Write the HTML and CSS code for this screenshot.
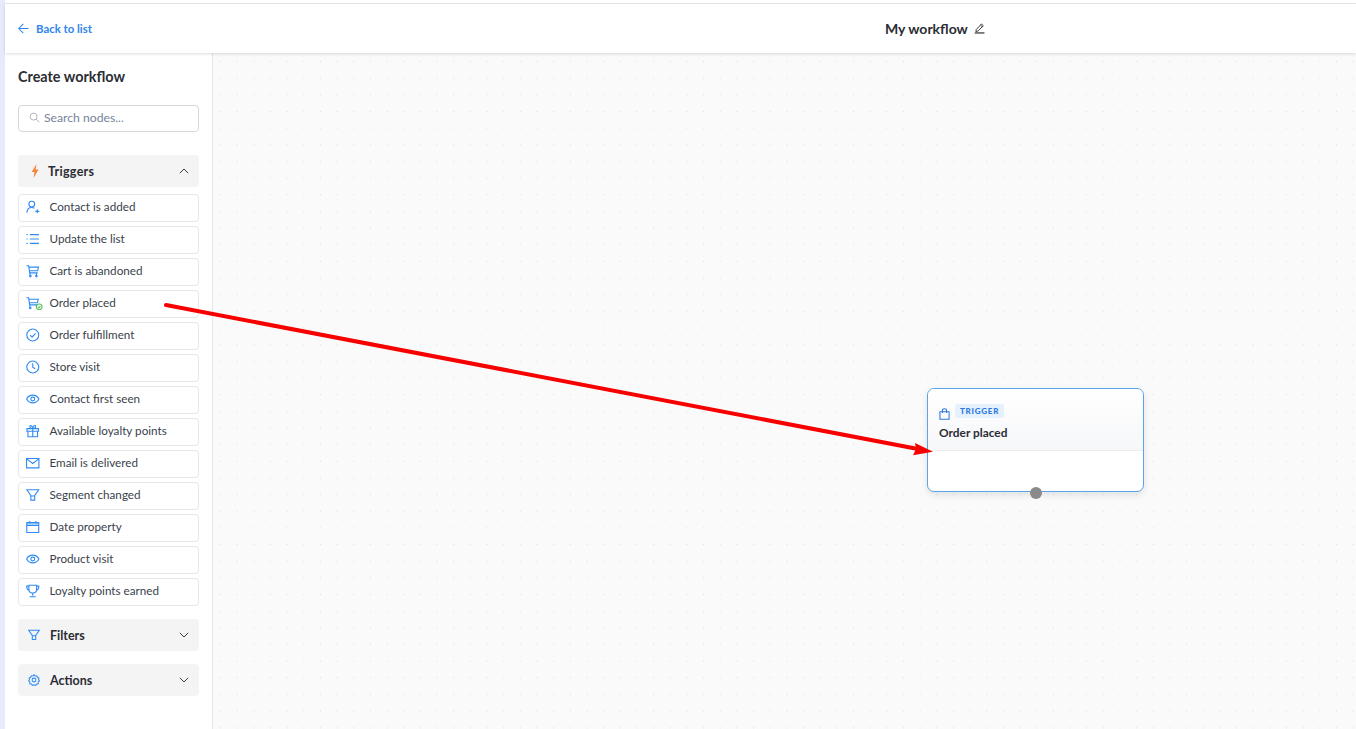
FILE: index.html
```html
<!DOCTYPE html>
<html lang="en">
<head>
<meta charset="utf-8">
<title>My workflow</title>
<link rel="stylesheet" href="styles.css">
</head>
<body>
<div class="stripe"></div>
<div class="app">
  <div class="topline"></div>
  <header class="header">
    <a class="back">
      <svg class="back-icon" viewBox="0 0 12 12"><path d="M11.500 6H.8M5.800 1 .8 6l5 5"/></svg>
      Back to list
    </a>
    <div class="title">My workflow
      <svg class="pencil" viewBox="0 0 12 12"><path d="M2.400 7.800 8.200 1.600l2 1.900-5.900 5.900-2.300.4zM7.100 2.800l2 1.900"/><path class="under" d="M.8 11.400h10.600"/></svg>
    </div>
  </header>
  <div class="main">
    <aside class="sidebar">
      <h1 class="side-title">Create workflow</h1>
      <div class="search">
        <svg class="search-icon" viewBox="0 0 12 12"><circle cx="5" cy="5" r="3.800"/><path d="m7.800 7.800 3.400 3.400"/></svg>
        <span>Search nodes...</span>
      </div>
      <div class="group triggers">
        <svg class="g-icon bolt" viewBox="0 0 8 14"><path d="M5.500 0 .6 8h2.800L2.500 14 7.600 5.600H4.700z"/></svg>
        <span class="g-label">Triggers</span>
        <svg class="chev" viewBox="0 0 10 6"><path d="m.8 5.200 4.200-4.200 4.200 4.200"/></svg>
      </div>
      <ul class="items">
        <li class="item"><svg class="i" viewBox="0 0 14 14"><circle cx="6" cy="4" r="3"/><path d="M1 13c0-3.500 2-5.500 5-5.500 1 0 2 .3 2.800.8M9.600 11.500h4.200M11.700 9.400v4.200"/></svg>Contact is added</li>
        <li class="item"><svg class="i" viewBox="0 0 14 14"><path d="M4 2.500h9.500M4 7h9.500M4 11.500h9.500M.5 2.500h1.200M.5 7h1.200M.5 11.500h1.200"/></svg>Update the list</li>
        <li class="item"><svg class="i" viewBox="0 0 14 14"><path d="M.5 1.500h2.300l1 7.500h8.400M3 3h10l-1 3.800H3.500M4.200 9.500v2.500M10.800 9.500v2.500"/><circle cx="4.500" cy="12.300" r=".8"/><circle cx="10.800" cy="12.300" r=".8"/></svg>Cart is abandoned</li>
        <li class="item"><svg class="i wide" viewBox="0 0 18 14"><path d="M.5 1.500h2.300l1 7.500h8.400M3 3h10l-1 3.800H3.500M4.200 9.500v2.500M10.800 9.500v1"/><circle cx="4.500" cy="12.300" r=".8"/><circle class="ok" cx="14" cy="11" r="3"/><path class="ok" d="m12.700 11 1 1 1.600-1.800"/></svg>Order placed</li>
        <li class="item"><svg class="i" viewBox="0 0 14 14"><circle cx="7" cy="7" r="6.200"/><path d="m4.300 7.200 2 2 3.600-4"/></svg>Order fulfillment</li>
        <li class="item"><svg class="i" viewBox="0 0 14 14"><circle cx="7" cy="7" r="6.200"/><path d="M7 3.200V7.300l2.500 1.500"/></svg>Store visit</li>
        <li class="item"><svg class="i" viewBox="0 0 14 14"><path d="M.6 7C2 4.300 4.300 3 7 3s5 1.300 6.400 4c-1.400 2.700-3.700 4-6.400 4S2 9.700.6 7z"/><circle cx="7" cy="7" r="2"/></svg>Contact first seen</li>
        <li class="item"><svg class="i" viewBox="0 0 14 14"><path d="M1 4.500h12v2.700H1zM2 7.200V13h10V7.200M7 4.500V13M7 4.500C5 4.500 3.800 3.500 4 2.200 4.300.6 6.500 1 7 4.500c.5-3.500 2.700-3.900 3-2.300.2 1.300-1 2.300-3 2.300z"/></svg>Available loyalty points</li>
        <li class="item"><svg class="i" viewBox="0 0 14 14"><path d="M.6 2.400h12.800v9.600H.6zM.8 2.700 7 7.500l6.200-4.800"/></svg>Email is delivered</li>
        <li class="item"><svg class="i" viewBox="0 0 14 14"><path d="M.8 1.500h12.400L9 7.500v4.800H5V7.500zM5 8h4"/></svg>Segment changed</li>
        <li class="item"><svg class="i" viewBox="0 0 14 14"><path class="cal" d="M.8 2.500h12.400v3H.8z"/><path d="M.8 2.500h12.400v10.200H.8zM.8 5.500h12.400M3.800 .8v2.500M10.200 .8v2.500"/></svg>Date property</li>
        <li class="item"><svg class="i" viewBox="0 0 14 14"><path d="M.6 7C2 4.300 4.300 3 7 3s5 1.300 6.400 4c-1.400 2.700-3.700 4-6.400 4S2 9.700.6 7z"/><circle cx="7" cy="7" r="2"/></svg>Product visit</li>
        <li class="item"><svg class="i" viewBox="0 0 14 14"><path d="M3 1h8v4.500c0 2.300-1.800 3.700-4 3.700S3 7.800 3 5.500zM3 2H.7c0 2.500 1 4 3 4.500M11 2h2.300c0 2.500-1 4-3 4.500M7 9.200V12M3.800 13h6.400"/></svg>Loyalty points earned</li>
      </ul>
      <div class="group filters">
        <svg class="g-icon line" viewBox="0 0 14 14"><path d="M.8 1.500h12.400L9 7.500v4.800H5V7.500zM5 8h4"/></svg>
        <span class="g-label">Filters</span>
        <svg class="chev" viewBox="0 0 10 6"><path d="m.8.800 4.200 4.200 4.200-4.200"/></svg>
      </div>
      <div class="group actions">
        <svg class="g-icon line" viewBox="0 0 14 14"><path d="M7 .8l1.300 1.500 2-.3.600 1.900 1.900.8-.5 1.900 1 1.400-1.400 1.400.1 2-2 .3-1 1.700L7 12.500l-1.900.9-1-1.700-2-.3.100-2L.8 8l1-1.400-.5-1.900 1.900-.8.600-1.900 2 .3z"/><circle cx="7" cy="7" r="2.200"/></svg>
        <span class="g-label">Actions</span>
        <svg class="chev" viewBox="0 0 10 6"><path d="m.8.800 4.200 4.200 4.200-4.200"/></svg>
      </div>
    </aside>
    <section class="canvas">
      <div class="node">
        <div class="node-head">
          <div class="node-tag-row">
            <svg class="bag" viewBox="0 0 12 13"><path d="M1 4h10v8.300H1zM3.700 5.500V2.800C3.700 1.500 4.700.8 6 .8s2.300.7 2.300 2v2.700"/></svg>
            <span class="tag">TRIGGER</span>
          </div>
          <div class="node-name">Order placed</div>
        </div>
        <span class="port"></span>
      </div>
    </section>
  </div>
</div>
<svg class="arrow" viewBox="0 0 1356 729"><path class="arrow-line" d="M166 305 918 449"/><path class="arrow-head" d="M933 451.800 913 455.200 916 449 915 443z"/></svg>
</body>
</html>
```
FILE: styles.css
```css
* { box-sizing: border-box; }
html, body { margin: 0; height: 100%; }
body {
  display: flex;
  height: 729px;
  overflow: hidden;
  background: #fff;
  font-family: Lato, "Noto Sans", sans-serif;
  color: #2b2f38;
}
.stripe { width: 5px; flex: none; background: #e6eafc; }
.app { flex: 1; display: flex; flex-direction: column; min-width: 0; }
.topline { height: 4px; flex: none; border-bottom: 1px solid #e8e9ee; }
.header {
  height: 49px;
  flex: none;
  display: flex;
  align-items: center;
  padding-left: 13px;
  background: #fff;
  box-shadow: 0 1px 3px rgba(0,0,0,.14);
  position: relative;
  z-index: 2;
}
.back {
  width: 867px;
  display: flex;
  align-items: center;
  gap: 7px;
  font-size: 11.4px;
  font-weight: 700;
  color: #2f86f0;
}
.back-icon { width: 11px; height: 11px; fill: none; stroke: #2f86f0; stroke-width: 1.1; }
.title {
  display: flex;
  align-items: center;
  gap: 6px;
  padding-bottom: 1px;
  font-size: 14px;
  font-weight: 700;
  color: #2b2d33;
}
.pencil { width: 11px; height: 12px; fill: none; stroke: #2b2d33; stroke-width: 1; }
.pencil .under { stroke-width: 1.3; }
.main { flex: 1; display: flex; min-height: 0; }
.sidebar {
  width: 208px;
  flex: none;
  padding: 17px 13px 0;
  border-right: 1px solid #e6e6e8;
  background: #fff;
}
.side-title { margin: 0; font-size: 14.4px; line-height: 14px; font-weight: 700; color: #2b2d33; }
.search {
  margin-top: 21px;
  height: 27px;
  display: flex;
  align-items: center;
  gap: 4px;
  padding-left: 10px;
  padding-bottom: 2px;
  border: 1px solid #d5d7da;
  border-radius: 4px;
  font-size: 12.2px;
  color: #77839a;
}
.search-icon { width: 11px; height: 11px; fill: none; stroke: #a9adb3; stroke-width: 1; }
.group {
  height: 32px;
  display: flex;
  align-items: center;
  background: #f4f4f5;
  border-radius: 4px;
  padding-right: 10px;
  font-size: 12.5px;
  font-weight: 700;
  color: #2b2d33;
}
.triggers { margin-top: 23px; padding-left: 13px; letter-spacing: .3px; }
.filters { margin-top: 13px; padding-left: 10px; }
.actions { margin-top: 13px; padding-left: 10px; }
.g-icon { flex: none; }
.bolt { width: 8px; height: 14px; margin-right: 9px; fill: #f5863f; }
.line { width: 12px; height: 12px; margin-right: 10px; fill: none; stroke: #2f8cf5; stroke-width: 1.2; }
.g-label { flex: 1; }
.chev { width: 10px; height: 6px; fill: none; stroke: #3a3d44; stroke-width: 1; }
.items {
  list-style: none;
  margin: 6.5px 0 0;
  padding: 0;
  display: flex;
  flex-direction: column;
  gap: 3.5px;
}
.item {
  height: 28.5px;
  display: flex;
  align-items: center;
  gap: 10px;
  padding: 0 0 3px 7px;
  border: 1px solid #e7e7e9;
  border-radius: 4px;
  font-size: 11.7px;
  color: #3a3f4b;
  white-space: nowrap;
}
.i { width: 13.5px; height: 14px; margin-top: 1px; flex: none; fill: none; stroke: #2f8cf5; stroke-width: 1.15; }
.i.wide { width: 17px; margin-right: -3.5px; }
.i .ok { stroke: #57c05a; }
.i .cal { fill: #a9d2fb; stroke: none; }
.canvas {
  flex: 1;
  position: relative;
  background-color: #fafafa;
  background-image: radial-gradient(circle, #e0e0e0 .6px, transparent 1px);
  background-size: 16.67px 16.67px;
  background-position: -.8px .2px;
}
.node {
  position: absolute;
  left: 714px;
  top: 335px;
  width: 217px;
  height: 104px;
  background: #fff;
  border: 1px solid #5aa5ea;
  border-radius: 7px;
  box-shadow: 0 3px 7px rgba(0,0,0,.1);
}
.node-head {
  height: 62px;
  padding: 15px 11px 0;
  border-bottom: 1px solid #ececee;
  border-radius: 7px 7px 0 0;
  background: linear-gradient(#fff, #f6f7f9);
}
.node-tag-row { display: flex; align-items: center; gap: 5px; height: 14px; }
.bag { width: 11px; height: 12px; margin-top: 5px; fill: none; stroke: #2c78dc; stroke-width: 1.15; }
.tag {
  padding: 0 5px;
  height: 14px;
  line-height: 14px;
  border-radius: 2px;
  background: #e5f1fd;
  color: #2c78dc;
  font-size: 8px;
  font-weight: 900;
  letter-spacing: .75px;
}
.node-name { margin-top: 7px; font-size: 11.9px; font-weight: 700; color: #2b2d33; }
.port {
  position: absolute;
  left: 102px;
  bottom: -7.500px;
  width: 12px;
  height: 12px;
  border-radius: 50%;
  background: #8a8a8a;
}
.arrow { position: absolute; left: 0; top: 0; width: 1356px; height: 729px; z-index: 5; pointer-events: none; }
.arrow-line { fill: none; stroke: #f70000; stroke-width: 4; stroke-linecap: round; }
.arrow-head { fill: #f70000; }
```
